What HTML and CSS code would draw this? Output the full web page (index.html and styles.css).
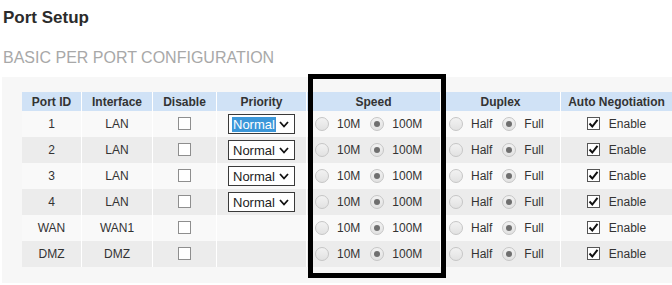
FILE: index.html
```html
<!DOCTYPE html>
<html lang="en">
<head>
    <meta charset="UTF-8">
    <meta name="viewport" content="width=device-width, initial-scale=1.0">
    <title>Port Setup</title>
    <link rel="stylesheet" href="styles.css">
</head>
<body>
    <h1 class="page-title">Port Setup</h1>
    <h2 class="section-title">BASIC PER PORT CONFIGURATION</h2>

    <div class="panel">
        <table class="ports">
            <colgroup>
                <col class="c-id">
                <col class="c-if">
                <col class="c-dis">
                <col class="c-pri">
                <col class="c-speed">
                <col class="c-duplex">
                <col class="c-auto">
            </colgroup>
            <thead>
                <tr>
                    <th>Port ID</th>
                    <th>Interface</th>
                    <th>Disable</th>
                    <th>Priority</th>
                    <th>Speed</th>
                    <th>Duplex</th>
                    <th>Auto Negotiation</th>
                </tr>
            </thead>
            <tbody>
                <tr>
                    <td>1</td>
                    <td>LAN</td>
                    <td><span class="check"></span></td>
                    <td><span class="select focused"><span class="sel-text">Normal</span><svg class="chev" width="10" height="7" viewBox="0 0 10 7"><polyline points="1,1 5,5.5 9,1" /></svg></span></td>
                    <td class="opts"><span class="radio"></span><span class="lbl">10M</span><span class="radio on"></span><span class="lbl">100M</span></td>
                    <td class="opts"><span class="radio"></span><span class="lbl">Half</span><span class="radio on"></span><span class="lbl">Full</span></td>
                    <td><span class="check on"><svg width="11" height="11" viewBox="0 0 11 11"><polyline points="1.5,5.5 4.3,8.5 9.5,1.8" /></svg></span><span class="lbl">Enable</span></td>
                </tr>
                <tr>
                    <td>2</td>
                    <td>LAN</td>
                    <td><span class="check"></span></td>
                    <td><span class="select"><span class="sel-text">Normal</span><svg class="chev" width="10" height="7" viewBox="0 0 10 7"><polyline points="1,1 5,5.5 9,1" /></svg></span></td>
                    <td class="opts"><span class="radio"></span><span class="lbl">10M</span><span class="radio on"></span><span class="lbl">100M</span></td>
                    <td class="opts"><span class="radio"></span><span class="lbl">Half</span><span class="radio on"></span><span class="lbl">Full</span></td>
                    <td><span class="check on"><svg width="11" height="11" viewBox="0 0 11 11"><polyline points="1.5,5.5 4.3,8.5 9.5,1.8" /></svg></span><span class="lbl">Enable</span></td>
                </tr>
                <tr>
                    <td>3</td>
                    <td>LAN</td>
                    <td><span class="check"></span></td>
                    <td><span class="select"><span class="sel-text">Normal</span><svg class="chev" width="10" height="7" viewBox="0 0 10 7"><polyline points="1,1 5,5.5 9,1" /></svg></span></td>
                    <td class="opts"><span class="radio"></span><span class="lbl">10M</span><span class="radio on"></span><span class="lbl">100M</span></td>
                    <td class="opts"><span class="radio"></span><span class="lbl">Half</span><span class="radio on"></span><span class="lbl">Full</span></td>
                    <td><span class="check on"><svg width="11" height="11" viewBox="0 0 11 11"><polyline points="1.5,5.5 4.3,8.5 9.5,1.8" /></svg></span><span class="lbl">Enable</span></td>
                </tr>
                <tr>
                    <td>4</td>
                    <td>LAN</td>
                    <td><span class="check"></span></td>
                    <td><span class="select"><span class="sel-text">Normal</span><svg class="chev" width="10" height="7" viewBox="0 0 10 7"><polyline points="1,1 5,5.5 9,1" /></svg></span></td>
                    <td class="opts"><span class="radio"></span><span class="lbl">10M</span><span class="radio on"></span><span class="lbl">100M</span></td>
                    <td class="opts"><span class="radio"></span><span class="lbl">Half</span><span class="radio on"></span><span class="lbl">Full</span></td>
                    <td><span class="check on"><svg width="11" height="11" viewBox="0 0 11 11"><polyline points="1.5,5.5 4.3,8.5 9.5,1.8" /></svg></span><span class="lbl">Enable</span></td>
                </tr>
                <tr>
                    <td>WAN</td>
                    <td>WAN1</td>
                    <td><span class="check"></span></td>
                    <td></td>
                    <td class="opts"><span class="radio"></span><span class="lbl">10M</span><span class="radio on"></span><span class="lbl">100M</span></td>
                    <td class="opts"><span class="radio"></span><span class="lbl">Half</span><span class="radio on"></span><span class="lbl">Full</span></td>
                    <td><span class="check on"><svg width="11" height="11" viewBox="0 0 11 11"><polyline points="1.5,5.5 4.3,8.5 9.5,1.8" /></svg></span><span class="lbl">Enable</span></td>
                </tr>
                <tr>
                    <td>DMZ</td>
                    <td>DMZ</td>
                    <td><span class="check"></span></td>
                    <td></td>
                    <td class="opts"><span class="radio"></span><span class="lbl">10M</span><span class="radio on"></span><span class="lbl">100M</span></td>
                    <td class="opts"><span class="radio"></span><span class="lbl">Half</span><span class="radio on"></span><span class="lbl">Full</span></td>
                    <td><span class="check on"><svg width="11" height="11" viewBox="0 0 11 11"><polyline points="1.5,5.5 4.3,8.5 9.5,1.8" /></svg></span><span class="lbl">Enable</span></td>
                </tr>
            </tbody>
        </table>
    </div>

    <!-- highlight frame drawn over the speed column -->
    <div class="highlight"></div>
</body>
</html>
```

FILE: styles.css
```css
body {
    margin: 0;
    background-color: #fff;
    font-family: "Liberation Sans", Arial, sans-serif;
    color: #333;
    position: relative;
    width: 672px;
    height: 285px;
    overflow: hidden;
}

.page-title {
    margin: 0;
    padding: 8px 0 0 3px;
    font-size: 17px;
    line-height: 20px;
    font-weight: bold;
    color: #2b2b2b;
}

.section-title {
    margin: 21px 0 0 3px;
    font-size: 16px;
    line-height: 18px;
    font-weight: normal;
    color: #a8a8a8;
}

.panel {
    margin: 10px 0 0 2px;
    padding: 15px 0 16px 20px;
    background-color: #f7f7f7;
}

.ports {
    table-layout: fixed;
    border-collapse: separate;
    border-spacing: 0;
    width: 650px;
    font-size: 12px;
}

.c-id { width: 59px; }
.c-if { width: 71px; }
.c-dis { width: 64px; }
.c-pri { width: 90px; }
.c-speed { width: 134px; }
.c-duplex { width: 120px; }
.c-auto { width: 112px; }

.ports th {
    height: 19px;
    padding: 0;
    background-color: #d0e2f6;
    font-weight: bold;
    color: #333;
    text-align: center;
    border-left: 1px solid #fff;
    white-space: nowrap;
}

.ports td {
    height: 26px;
    padding: 0;
    text-align: center;
    vertical-align: middle;
    border-left: 1px solid #fff;
    color: #333;
    white-space: nowrap;
}

.ports th:first-child,
.ports td:first-child {
    border-left: none;
}

.ports tbody tr:nth-child(odd) td {
    background-color: #f9f9f9;
}

.ports tbody tr:nth-child(even) td {
    background-color: #ececec;
}

.ports td.opts {
    text-align: left;
    padding-left: 8px;
}

.radio {
    display: inline-block;
    box-sizing: border-box;
    width: 14px;
    height: 14px;
    border: 1px solid #c6c6c6;
    border-radius: 50%;
    background: linear-gradient(#f2f2f2, #e2e2e2);
    vertical-align: -3px;
    margin-right: 8px;
    position: relative;
}

.radio.on::after {
    content: "";
    position: absolute;
    left: 3px;
    top: 3px;
    width: 6px;
    height: 6px;
    border-radius: 50%;
    background-color: #6f6f6f;
}

.lbl {
    margin-right: 10px;
}

.ports td:last-child .lbl {
    margin-right: 0;
}

.check {
    display: inline-block;
    box-sizing: border-box;
    width: 13px;
    height: 13px;
    border: 1px solid #8e8e8e;
    background-color: #fff;
    vertical-align: -2px;
}

.check.on {
    border-color: #555;
    margin-right: 9px;
}

.check svg {
    display: block;
}

.check polyline {
    fill: none;
    stroke: #111;
    stroke-width: 2;
}

.select {
    display: inline-flex;
    align-items: center;
    box-sizing: border-box;
    width: 67px;
    height: 20px;
    border: 1px solid #3a3a3a;
    background-color: #fff;
    vertical-align: middle;
    text-align: left;
    font-size: 13px;
    color: #222;
}

.sel-text {
    margin-left: 3px;
    padding: 0 1px;
    line-height: 15px;
}

.select.focused .sel-text {
    background-color: #3b97d9;
    color: #fff;
}

.chev {
    margin-left: auto;
    margin-right: 5px;
}

.chev polyline {
    fill: none;
    stroke: #111;
    stroke-width: 1.8;
}

.highlight {
    position: absolute;
    left: 308px;
    top: 74px;
    width: 138px;
    height: 204px;
    box-sizing: border-box;
    border: 5px solid #000;
}
```
